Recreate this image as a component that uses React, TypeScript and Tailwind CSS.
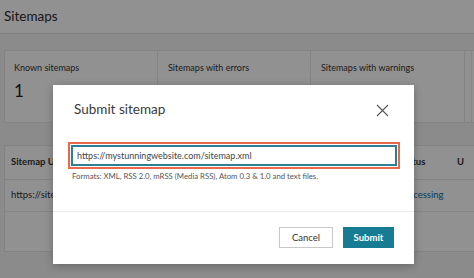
import React from "react";

export default function App() {
  const font = { fontFamily: 'Lato, "Noto Sans", Arial, sans-serif' };
  return (
    <div className="relative w-[474px] h-[278px] overflow-hidden bg-[#f4f4f4]" style={font}>
      {/* page underneath */}
      <div className="h-[34px] bg-white border-b border-[#e2e2e2] flex items-center pl-[4px]">
        <span className="text-[13.5px] text-[#2b2b2b] leading-none">Sitemaps</span>
      </div>
      <div className="px-[4px] pt-[16px]">
        <div className="flex h-[73px] bg-white border border-[#e6e6e6] w-[520px]">
          <div className="w-[153px] shrink-0 border-r border-[#e6e6e6] pl-[9px] pt-[12px]">
            <div className="text-[9px] text-[#333] leading-none">Known sitemaps</div>
            <div className="text-[17px] text-[#222] leading-none mt-[10px]">1</div>
          </div>
          <div className="w-[153px] shrink-0 border-r border-[#e6e6e6] pl-[10px] pt-[12px]">
            <div className="text-[9px] text-[#333] leading-none">Sitemaps with errors</div>
          </div>
          <div className="w-[154px] shrink-0 border-r border-[#e6e6e6] pl-[10px] pt-[12px]">
            <div className="text-[9px] text-[#333] leading-none">Sitemaps with warnings</div>
          </div>
          <div className="w-[60px] shrink-0 border-l border-[#ececec] ml-[6px]" />
        </div>
        <div className="mt-[22px] h-[107px] bg-white border border-[#e6e6e6] w-[520px]">
          <div className="h-[34px] border-b border-[#e6e6e6] flex items-center text-[9.5px] font-bold text-[#333]">
            <span className="pl-[6px] w-[394px]">Sitemap URL</span>
            <span className="w-[58px]">Status</span>
            <span>U</span>
          </div>
          <div className="h-[32px] border-b border-[#ececec] flex items-center text-[9.5px] text-[#333]">
            <span className="pl-[6px] w-[394px]">https://sitemap.xml</span>
            <span className="text-[#0b6aa8]">Processing</span>
          </div>
        </div>
      </div>

      {/* overlay */}
      <div className="absolute inset-0 bg-black/[0.43]" />

      {/* modal */}
      <div className="absolute left-[53px] top-[85px] w-[361px] h-[179px] bg-white shadow-[0_2px_8px_rgba(0,0,0,0.25)] flex flex-col">
        <div className="flex items-center justify-between pl-[21px] pr-[25px] pt-[18px]">
          <span className="text-[13.5px] text-[#3a3a3a] leading-none">Submit sitemap</span>
          <svg width="13" height="13" viewBox="0 0 13 13" className="mt-[1px]">
            <path d="M1 1L12 12M12 1L1 12" stroke="#555" strokeWidth="1.1" fill="none" />
          </svg>
        </div>
        <div className="ml-[15px] mt-[25px] w-[332px] h-[27px] border-2 border-[#e8694b] p-[1px]">
          <div className="h-full border-2 border-[#2d7f93] flex items-center pl-[4px]">
            <span className="text-[9px] text-[#444] leading-none">https://mystunningwebsite.com/sitemap.xml</span>
          </div>
        </div>
        <div className="ml-[19px] mt-[4px] text-[7.75px] text-[#555] leading-none">
          Formats: XML, RSS 2.0, mRSS (Media RSS), Atom 0.3 &amp; 1.0 and text files.
        </div>
        <div className="mt-[30px] border-t border-[#ececec]" />
        <div className="flex justify-end gap-[10px] pr-[20px] mt-[15px]">
          <button className="w-[54px] h-[21px] border border-[#c8c8c8] bg-white text-[9.5px] text-[#333] leading-none">
            Cancel
          </button>
          <button className="w-[51px] h-[21px] bg-[#157c94] text-[9.5px] text-white font-bold leading-none">
            Submit
          </button>
        </div>
      </div>
    </div>
  );
}
